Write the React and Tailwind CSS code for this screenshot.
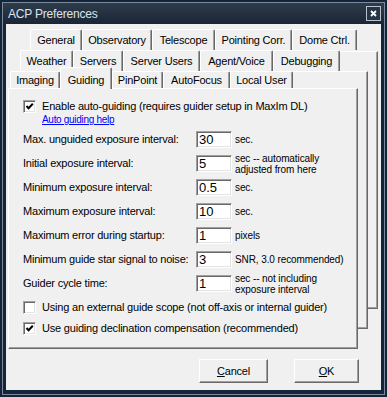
import React from 'react'

const row1 = [
    ['General', 'w-[52px]'],
    ['Observatory', 'w-[70px]'],
    ['Telescope', 'w-[63px]'],
    ['Pointing Corr.', 'w-[77px]'],
    ['Dome Ctrl.', 'w-[65px]'],
]
const row2 = [
    ['Weather', 'w-[53px]'],
    ['Servers', 'w-[50px]'],
    ['Server Users', 'w-[77px]'],
    ['Agent/Voice', 'w-[73px]'],
    ['Debugging', 'w-[67px]'],
]
const row3 = [
    ['Imaging', 'w-[50px]'],
    ['Guiding', 'w-[52px]', true],
    ['PinPoint', 'w-[51px]'],
    ['AutoFocus', 'w-[67px]'],
    ['Local User', 'w-[63px]'],
]

const fields = [
    ['Max. unguided exposure interval:', '30', ['sec.']],
    ['Initial exposure interval:', '5', ['sec -- automatically', 'adjusted from here']],
    ['Minimum exposure interval:', '0.5', ['sec.']],
    ['Maximum exposure interval:', '10', ['sec.']],
    ['Maximum error during startup:', '1', ['pixels']],
    ['Minimum guide star signal to noise:', '3', ['SNR, 3.0 recommended)']],
    ['Guider cycle time:', '1', ['sec -- not including', 'exposure interval']],
]

const Tab = ({ label, width, height, selected }) => (
    <div
        className={`${width} ${height} ${selected ? 'relative z-10 -mb-[1px] pt-[3px]' : ''} shrink-0 flex items-center justify-center bg-[#f0f0f0] border-l border-t border-white border-r border-r-[#696969] rounded-t-[2px] shadow-[inset_-1px_0_0_#a0a0a0] text-[11px] tracking-[-0.2px] text-black whitespace-nowrap`}
    >
        {label}
    </div>
)

const CheckBox = ({ checked, label }) => (
    <div className="flex items-center h-[13px]">
        <div className="w-[13px] h-[13px] shrink-0 bg-white border border-t-[#a0a0a0] border-l-[#a0a0a0] border-r-white border-b-white shadow-[inset_1px_1px_0_#696969,inset_-1px_-1px_0_#e3e3e3] flex items-center justify-center">
            {checked && (
                <svg width="9" height="9" viewBox="0 0 9 9">
                    <path d="M1.5 4 L3.6 6.2 L7.8 1.8" fill="none" stroke="#000" strokeWidth="2" />
                </svg>
            )}
        </div>
        <span className="ml-[6px] text-[11px] tracking-[-0.2px] whitespace-nowrap">{label}</span>
    </div>
)

const Field = ({ label, value, units }) => (
    <div className="flex items-center h-[17px]">
        <div className="w-[173px] shrink-0 text-[11px] tracking-[-0.2px] whitespace-nowrap">{label}</div>
        <div className="w-[36px] h-[17px] shrink-0 bg-white border border-t-[#a0a0a0] border-l-[#a0a0a0] border-r-white border-b-white shadow-[inset_1px_1px_0_#696969,inset_-1px_-1px_0_#e3e3e3] pl-[2px] flex items-center text-[13px] leading-none">
            {value}
        </div>
        <div className="ml-[3px] text-[10px] leading-[11px] tracking-[-0.1px] whitespace-nowrap">
            {units.map((u) => (
                <div key={u}>{u}</div>
            ))}
        </div>
    </div>
)

const Button = ({ width, children }) => (
    <div className={`${width} h-[24px] flex items-center justify-center bg-[#f0f0f0] border border-t-white border-l-white border-r-[#696969] border-b-[#696969] shadow-[inset_-1px_-1px_0_#a0a0a0] text-[11px] tracking-[-0.2px]`}>
        {children}
    </div>
)

export default function App() {
    return (
        <div className="w-[387px] h-[397px] bg-[#14243a] p-[2px] font-['Liberation_Sans',Arial,sans-serif] text-black">
            <div className="h-full border border-[#7d8a99] flex flex-col">
                {/* title bar */}
                <div className="h-[21px] shrink-0 flex items-center justify-between pl-[5px] pr-[3px] bg-gradient-to-b from-[#2f3c4b] to-[#1a2635]">
                    <span className="text-[12px] tracking-[-0.2px] text-[#dde3ea]">ACP Preferences</span>
                    <div className="w-[15px] h-[15px] border border-[#b9c3ce] bg-[#263445] flex items-center justify-center">
                        <svg width="9" height="9" viewBox="0 0 9 9">
                            <path d="M2 2 L7 7 M7 2 L2 7" stroke="#fff" strokeWidth="1.8" />
                        </svg>
                    </div>
                </div>

                {/* client area */}
                <div className="mx-[3px] h-[366px] bg-[#f0f0f0] flex flex-col">
                    <div className="relative">
                        {/* pages stacked behind the current one */}
                        <div className="absolute left-[24px] top-[27px] w-[348px] h-[258px] bg-[#f0f0f0] border border-t-white border-l-white border-r-[#696969] border-b-[#696969] shadow-[inset_-1px_-1px_0_#a0a0a0]" />
                        <div className="relative flex ml-[24px] mt-[5px] h-[21px]">
                            {row1.map(([l, w]) => (
                                <Tab key={l} label={l} width={w} height="h-[21px]" />
                            ))}
                        </div>
                        <div className="relative flex ml-[14px] h-[21px]">
                            {row2.map(([l, w]) => (
                                <Tab key={l} label={l} width={w} height="h-[21px]" />
                            ))}
                        </div>
                        <div className="absolute left-[14px] top-[47px] w-[348px] h-[258px] bg-[#f0f0f0] border border-t-white border-l-white border-r-[#696969] border-b-[#696969] shadow-[inset_-1px_-1px_0_#a0a0a0]" />
                        <div className="relative flex items-end ml-[4px] h-[17px]">
                            {row3.map(([l, w, s]) => (
                                <Tab key={l} label={l} width={w} height={s ? 'h-[22px]' : 'h-[17px]'} selected={s} />
                            ))}
                        </div>

                        {/* current page: Guiding */}
                        <div className="relative ml-[2px] w-[350px] h-[261px] bg-[#f0f0f0] border border-t-white border-l-white border-r-[#696969] border-b-[#696969] shadow-[inset_-1px_-1px_0_#a0a0a0] pl-[14px] pt-[11px]">
                            <CheckBox checked label="Enable auto-guiding (requires guider setup in MaxIm DL)" />
                            <div className="ml-[19px] mt-[1px] text-[10px] leading-[12px] tracking-[-0.3px] text-[#0000ff] underline">
                                Auto guiding help
                            </div>
                            <div className="mt-[5px] flex flex-col gap-[7px]">
                                {fields.map(([l, v, u]) => (
                                    <Field key={l} label={l} value={v} units={u} />
                                ))}
                            </div>
                            <div className="mt-[9px] flex flex-col gap-[8px]">
                                <CheckBox label="Using an external guide scope (not off-axis or internal guider)" />
                                <CheckBox checked label="Use guiding declination compensation (recommended)" />
                            </div>
                        </div>
                    </div>

                    <div className="flex mt-[10px] ml-[193px] gap-[26px]">
                        <Button width="w-[69px]">
                            <span><span className="underline">C</span>ancel</span>
                        </Button>
                        <Button width="w-[65px]">
                            <span><span className="underline">O</span>K</span>
                        </Button>
                    </div>
                </div>
            </div>
        </div>
    )
}
